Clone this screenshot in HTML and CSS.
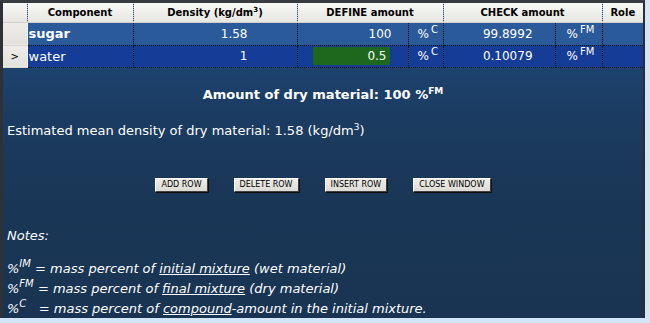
FILE: index.html
```html
<!DOCTYPE html>
<html>
<head>
<meta charset="utf-8">
<title>Mixture</title>
<link rel="stylesheet" href="styles.css">
</head>
<body>
<div class="window">
  <table class="grid">
    <colgroup>
      <col class="c-sel"><col class="c-comp"><col class="c-dens"><col class="c-defv"><col class="c-defu"><col class="c-chkv"><col class="c-chku"><col class="c-role">
    </colgroup>
    <thead>
      <tr class="head">
        <th class="sel"></th>
        <th>Component</th>
        <th>Density (kg/dm<sup>3</sup>)</th>
        <th colspan="2">DEFINE amount</th>
        <th colspan="2">CHECK amount</th>
        <th class="last">Role</th>
      </tr>
    </thead>
    <tbody>
      <tr class="row row-sugar">
        <td class="sel"></td>
        <td class="name bold">sugar</td>
        <td class="dens">1.58</td>
        <td class="defv">100</td>
        <td class="defu">%<sup>C</sup></td>
        <td class="chkv">99.8992</td>
        <td class="chku">%<sup>FM</sup></td>
        <td class="role"></td>
      </tr>
      <tr class="row row-water">
        <td class="sel">&gt;</td>
        <td class="name">water</td>
        <td class="dens">1</td>
        <td class="defv edit"><span class="editbox">0.5</span></td>
        <td class="defu">%<sup>C</sup></td>
        <td class="chkv">0.10079</td>
        <td class="chku">%<sup>FM</sup></td>
        <td class="role"></td>
      </tr>
    </tbody>
  </table>
  <div class="content">
    <p class="amount">Amount of dry material: 100 %<sup>FM</sup></p>
    <p class="density">Estimated mean density of dry material: 1.58 (kg/dm<sup>3</sup>)</p>
    <div class="buttons">
      <button class="btn">ADD ROW</button>
      <button class="btn">DELETE ROW</button>
      <button class="btn">INSERT ROW</button>
      <button class="btn">CLOSE WINDOW</button>
    </div>
    <p class="notes-title">Notes:</p>
    <div class="notes">
      <p>%<sup>IM</sup> = mass percent of <u>initial mixture</u> (wet material)</p>
      <p>%<sup>FM</sup> = mass percent of <u>final mixture</u> (dry material)</p>
      <p>%<sup>C</sup>&nbsp;&nbsp; = mass percent of <u>compound</u>-amount in the initial mixture.</p>
    </div>
  </div>
</div>
</body>
</html>
```

FILE: styles.css
```css
html, body {
  margin: 0;
  padding: 0;
}
body {
  background: #d3e6f7;
  width: 650px;
  height: 323px;
  overflow: hidden;
  font-family: "DejaVu Sans", Verdana, sans-serif;
}
.window {
  width: 640px;
  height: 315px;
  border-top: 3px solid #383c41;
  border-left: 3px solid #2e3237;
  border-right: 2px solid #2a2e33;
  background: linear-gradient(to bottom, #214b82 0px, #1f4676 40px, #1b3c62 110px, #1a3757 180px, #193453 100%);
  overflow: hidden;
}
.grid {
  border-collapse: collapse;
  table-layout: fixed;
  width: 640px;
}
.c-sel { width: 24px; }
.c-comp { width: 106px; }
.c-dens { width: 164px; }
.c-defv { width: 111px; }
.c-defu { width: 35px; }
.c-chkv { width: 112px; }
.c-chku { width: 47px; }
.c-role { width: 41px; }

.grid th, .grid td {
  padding: 0;
  white-space: nowrap;
  overflow: hidden;
}
.head {
  height: 19px;
}
.head th {
  background: linear-gradient(to bottom, #f8f8f6, #e6e5e1);
  font-size: 10px;
  font-weight: bold;
  color: #000;
  text-align: center;
  border-right: 1px dotted #c9c8c2;
  border-bottom: 1px solid #d0cfca;
}
.head th.last {
  border-right: none;
}
.head sup {
  font-size: 7px;
  line-height: 0;
  vertical-align: 4px;
}
.row td {
  color: #fff;
  font-size: 12px;
  border-right: 1px dotted #0a1424;
  border-bottom: 1px dotted #0a1424;
}
.row td.role {
  border-right: none;
}
.row-sugar {
  height: 23px;
}
.row-water {
  height: 22px;
}
.row-sugar td {
  background: #2b5a9b;
}
.row-water td {
  background: #153d98;
}
.row td.sel {
  background: linear-gradient(to bottom, #eeede9, #e2e1dc);
  color: #000;
  font-size: 10px;
  text-align: center;
  border-right: 1px solid #f4f4f2;
  border-bottom: 1px solid #d6d5d0;
}
.name {
  font-size: 13px !important;
  padding-left: 1px !important;
}
.bold {
  font-weight: bold;
}
.dens {
  text-align: right;
  padding-right: 49px !important;
}
.defv {
  text-align: right;
  padding-right: 16px !important;
}
.defv.edit {
  padding-right: 18px !important;
}
.editbox {
  display: inline-block;
  box-sizing: border-box;
  width: 77px;
  height: 18px;
  line-height: 18px;
  padding-right: 3px;
  background: #1d681d;
  vertical-align: middle;
}
.defu {
  padding-left: 9px !important;
}
.chkv {
  text-align: right;
  padding-right: 22px !important;
}
.chku {
  padding-left: 11px !important;
}
.row sup {
  font-size: 10px;
  line-height: 0;
  vertical-align: 5px;
  margin-left: 2px;
}
.content {
  padding: 0 4px;
  color: #fff;
}
.content p {
  margin: 0;
}
.amount {
  margin-top: 19px !important;
  text-align: center;
  font-weight: bold;
  font-size: 13px;
  line-height: 16px;
}
.amount sup, .density sup {
  font-size: 9px;
  line-height: 0;
  vertical-align: 5px;
}
.density {
  margin-top: 20px !important;
  font-size: 13px;
  line-height: 15px;
}
.buttons {
  display: flex;
  justify-content: center;
  gap: 26px;
  margin-top: 40px;
}
.btn {
  height: 14px;
  padding: 0 5px;
  margin: 0;
  font-family: "DejaVu Sans", Verdana, sans-serif;
  font-size: 8px;
  line-height: 12px;
  color: #000;
  background: linear-gradient(to bottom, #eeede8, #dcdbd4);
  border: 1px solid;
  border-color: #ffffff #404040 #404040 #ffffff;
  box-shadow: 1px 1px 0 #101010;
}
.notes-title {
  margin-top: 34px !important;
  font-style: italic;
  font-size: 13px;
  line-height: 20px;
}
.notes {
  margin-top: 13px;
  font-style: italic;
  font-size: 13px;
}
.notes p {
  line-height: 20px;
}
.notes sup {
  font-size: 10px;
  line-height: 0;
  vertical-align: 6px;
}
```
